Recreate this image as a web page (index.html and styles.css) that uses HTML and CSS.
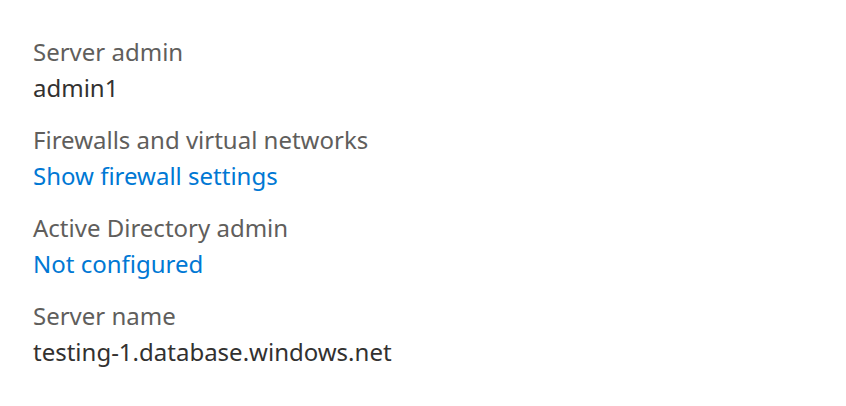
FILE: index.html
```html
<!DOCTYPE html>
<html>
<head>
<meta charset="utf-8">
<link rel="stylesheet" href="styles.css">
</head>
<body>
<div class="props">
  <div class="prop">
    <div class="label">Server admin</div>
    <div class="value">admin1</div>
  </div>
  <div class="prop">
    <div class="label">Firewalls and virtual networks</div>
    <a class="value link" href="#">Show firewall settings</a>
  </div>
  <div class="prop">
    <div class="label">Active Directory admin</div>
    <a class="value link" href="#">Not configured</a>
  </div>
  <div class="prop">
    <div class="label">Server name</div>
    <div class="value">testing-1.database.windows.net</div>
  </div>
</div>
</body>
</html>
```
FILE: styles.css
```css
html, body {
  margin: 0;
  background: #ffffff;
}
body {
  font-family: "Noto Sans", "Open Sans", sans-serif;
  font-size: 24px;
}
.props {
  display: flex;
  flex-direction: column;
  gap: 16px;
  padding: 34px 0 0 33px;
}
.prop {
  display: flex;
  flex-direction: column;
  align-items: flex-start;
}
.label, .value {
  line-height: 36px;
  white-space: nowrap;
}
.label {
  color: #605e5c;
}
.value {
  color: #323130;
}
.link {
  color: #0078d4;
  text-decoration: none;
}
```
